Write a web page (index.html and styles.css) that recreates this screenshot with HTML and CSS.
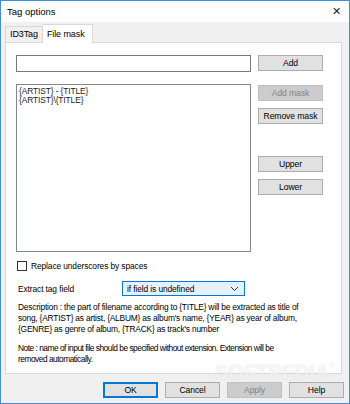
FILE: index.html
```html
<!DOCTYPE html>
<html lang="en">
<head>
    <meta charset="UTF-8">
    <title>Tag options</title>
    <link rel="stylesheet" href="styles.css">
</head>
<body>
    <div class="window">
        <div class="titlebar">
            <span class="title">Tag options</span>
            <span class="close">✕</span>
        </div>

        <div class="tabs">
            <div class="tab">ID3Tag</div>
            <div class="tab active">File mask</div>
        </div>

        <div class="panel">
            <div class="mask-row">
                <div class="textbox"></div>
                <button class="btn side-btn">Add</button>
            </div>

            <div class="list-row">
                <div class="listbox">
                    <div class="item">{ARTIST} - {TITLE}</div>
                    <div class="item">{ARTIST}\{TITLE}</div>
                </div>
                <div class="side-buttons">
                    <button class="btn side-btn disabled">Add mask</button>
                    <button class="btn side-btn">Remove mask</button>
                    <button class="btn side-btn upper">Upper</button>
                    <button class="btn side-btn">Lower</button>
                </div>
            </div>

            <label class="check-row">
                <span class="checkbox"></span>
                Replace underscores by spaces
            </label>

            <div class="extract-row">
                <span class="extract-label">Extract tag field</span>
                <div class="select">
                    <span>if field is undefined</span>
                    <svg width="9" height="6" viewBox="0 0 9 6"><path d="M1 1 L4.5 4.5 L8 1" fill="none" stroke="#333" stroke-width="1"/></svg>
                </div>
            </div>

            <p class="desc">Description : the part of filename according to {TITLE} will be extracted as title of<br>song, {ARTIST} as artist, {ALBUM} as album's name, {YEAR} as year of album,<br>{GENRE} as genre of album, {TRACK} as track's number</p>

            <p class="desc note">Note : name of input file should be specified without extension. Extension will be<br>removed automatically.</p>
        </div>

        <div class="footer">
            <button class="btn foot-btn default">OK</button>
            <button class="btn foot-btn">Cancel</button>
            <button class="btn foot-btn disabled">Apply</button>
            <button class="btn foot-btn">Help</button>
        </div>

        <div class="watermark">SOFTPEDIA<sup>®</sup></div>
    </div>
</body>
</html>
```

FILE: styles.css
```css
body {
    margin: 0;
    padding: 0;
    font-family: 'Liberation Sans', Arial, sans-serif;
    font-size: 8.4px;
    letter-spacing: -0.1px;
    color: #000;
    background: #fff;
}

.window {
    position: relative;
    width: 350px;
    height: 404px;
    box-sizing: border-box;
    border: 1px solid #3c8fdc;
    background-color: #f0f0f0;
    display: flex;
    flex-direction: column;
    overflow: hidden;
}

.titlebar {
    height: 21px;
    background: #fff;
    display: flex;
    align-items: center;
    justify-content: space-between;
    padding: 0 8px 0 6px;
    flex-shrink: 0;
}

.title {
    font-size: 9.5px;
    letter-spacing: 0;
}

.close {
    font-size: 11px;
    color: #222;
}

/* Tab strip */
.tabs {
    display: flex;
    align-items: flex-end;
    height: 20px;
    padding-left: 4px;
    flex-shrink: 0;
}

.tab {
    height: 15px;
    line-height: 15px;
    padding: 0 4px;
    border: 1px solid #d9d9d9;
    border-bottom: none;
    background: #f0f0f0;
    font-size: 9px;
}

.tab.active {
    height: 18px;
    line-height: 18px;
    padding: 0 7px 0 4px;
    background: #fff;
    border-left: none;
    margin-bottom: -1px;
    position: relative;
    z-index: 1;
}

.panel {
    height: 332px;
    margin: 0 7px 0 4px;
    border: 1px solid #d9d9d9;
    background: #fff;
    padding: 12px 10px 0 10px;
    box-sizing: border-box;
    flex-shrink: 0;
}

.btn {
    font-family: inherit;
    font-size: 8.6px;
    letter-spacing: -0.1px;
    background: #e1e1e1;
    border: 1px solid #adadad;
    color: #000;
    padding: 0;
    box-sizing: border-box;
}

.btn.disabled {
    background: #cccccc;
    border-color: #bfbfbf;
    color: #838383;
}

.mask-row {
    display: flex;
    gap: 7px;
}

.textbox {
    width: 235px;
    height: 17px;
    box-sizing: border-box;
    border: 1px solid #7a7a7a;
}

.side-btn {
    width: 65px;
    height: 16px;
}

.list-row {
    display: flex;
    gap: 7px;
    margin-top: 12px;
}

.listbox {
    width: 235px;
    height: 168px;
    box-sizing: border-box;
    border: 1px solid #828790;
    padding: 2px 2px;
}

.item {
    line-height: 9px;
    color: #1a1a1a;
}

.side-buttons {
    display: flex;
    flex-direction: column;
    gap: 7px;
    padding-top: 1px;
}

.side-btn.upper {
    margin-top: 25px;
}

.check-row {
    display: flex;
    align-items: center;
    gap: 4px;
    margin-top: 9px;
    padding-left: 1px;
}

.checkbox {
    width: 10px;
    height: 10px;
    box-sizing: border-box;
    border: 1px solid #333;
    background: #fff;
}

.extract-row {
    display: flex;
    align-items: center;
    margin-top: 10px;
    padding-left: 2px;
}

.extract-label {
    width: 104px;
}

.select {
    width: 123px;
    height: 15px;
    box-sizing: border-box;
    border: 1px solid #0078d7;
    background: #e5f1fb;
    display: flex;
    align-items: center;
    justify-content: space-between;
    padding: 0 5px 0 4px;
}

.desc {
    margin: 6px 0 0 2px;
    line-height: 11px;
    white-space: nowrap;
    letter-spacing: -0.2px;
}

.desc.note {
    margin-top: 8px;
    letter-spacing: -0.5px;
}

.footer {
    display: flex;
    justify-content: flex-end;
    gap: 7px;
    padding: 8px 5px 0 0;
}

.foot-btn {
    width: 55px;
    height: 16px;
}

.foot-btn.default {
    border: 2px solid #0078d7;
}

/* Watermark over the bottom corner */
.watermark {
    position: absolute;
    left: 214px;
    top: 360px;
    font-size: 20px;
    font-weight: bold;
    letter-spacing: 0;
    color: rgba(255, 255, 255, 0.6);
    text-shadow: 0 0 2px rgba(160, 160, 160, 0.3);
    pointer-events: none;
}

.watermark sup {
    font-size: 8px;
    vertical-align: top;
}
```
